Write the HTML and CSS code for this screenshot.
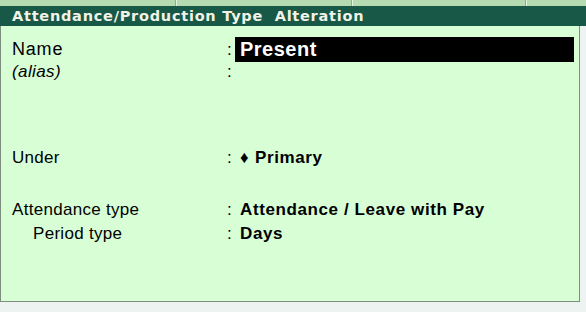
FILE: index.html
```html
<!DOCTYPE html>
<html>
<head>
<meta charset="utf-8">
<link rel="stylesheet" href="styles.css">
</head>
<body>
<div class="strip">
  <div class="cell c1"></div>
  <div class="cell c2"></div>
  <div class="cell c3"></div>
  <div class="cell c4"></div>
</div>
<div class="title">Attendance/Production Type&nbsp; Alteration</div>
<div class="panel">
  <div class="row name-row">
    <div class="label name-label">Name</div>
    <div class="colon">:</div>
    <div class="value name-box">Present</div>
  </div>
  <div class="row alias-row">
    <div class="label alias-label">(alias)</div>
    <div class="colon">:</div>
    <div class="value"></div>
  </div>
  <div class="row under-row">
    <div class="label">Under</div>
    <div class="colon">:</div>
    <div class="value"><span class="diamond">♦</span> Primary</div>
  </div>
  <div class="row att-row">
    <div class="label">Attendance type</div>
    <div class="colon">:</div>
    <div class="value">Attendance / Leave with Pay</div>
  </div>
  <div class="row">
    <div class="label sub-label">Period type</div>
    <div class="colon">:</div>
    <div class="value">Days</div>
  </div>
</div>
</body>
</html>
```
FILE: styles.css
```css
html, body {
  margin: 0;
  padding: 0;
}
body {
  width: 586px;
  height: 312px;
  background: #edf3f1;
  overflow: hidden;
  font-family: "Liberation Sans", Arial, sans-serif;
  color: #000;
}
.strip {
  display: flex;
  height: 6px;
  background: #b7dbb0;
}
.cell {
  height: 6px;
  box-sizing: border-box;
  border-right: 1px solid #8fae8a;
  box-shadow: 1px 0 0 #e4f4e0;
}
.c1 { width: 176px; }
.c2 { width: 176px; }
.c3 { width: 174px; }
.c4 { flex: 1; border-right: none; box-shadow: none; }
.title {
  height: 20px;
  line-height: 21px;
  background: #175846;
  color: #f1f3e6;
  font-family: "DejaVu Sans", Verdana, sans-serif;
  font-weight: bold;
  font-size: 14.5px;
  letter-spacing: 0.75px;
  padding-left: 12px;
  white-space: nowrap;
}
.panel {
  width: 580px;
  height: 276px;
  box-sizing: border-box;
  background: #d8fed6;
  border-left: 1px solid #7e8e7e;
  border-right: 1px solid #7e8e7e;
  border-bottom: 1px solid #7e8e7e;
  padding-top: 11px;
}
.row {
  display: flex;
  font-size: 17px;
  letter-spacing: 0.3px;
  line-height: 24px;
  height: 24px;
}
.label {
  width: 215px;
  padding-left: 11px;
  white-space: nowrap;
}
.sub-label {
  width: 194px;
  padding-left: 32px;
}
.colon {
  width: 8px;
}
.value {
  flex: 1;
  padding-left: 5px;
  font-weight: bold;
  letter-spacing: 0.6px;
  white-space: nowrap;
}
.name-row {
  height: 25px;
  line-height: 25px;
}
.name-label {
  font-size: 18px;
  letter-spacing: 0.8px;
}
.name-box {
  flex: none;
  width: 334px;
  background: #000;
  color: #fff;
  font-size: 20px;
  letter-spacing: 0.5px;
}
.alias-row {
  height: 20px;
  line-height: 20px;
}
.alias-label {
  font-style: italic;
  letter-spacing: 0.4px;
}
.under-row {
  margin-top: 64px;
}
.att-row {
  margin-top: 28px;
}
.diamond {
  font-size: 17px;
  letter-spacing: 0;
  margin-right: 1px;
}
```
